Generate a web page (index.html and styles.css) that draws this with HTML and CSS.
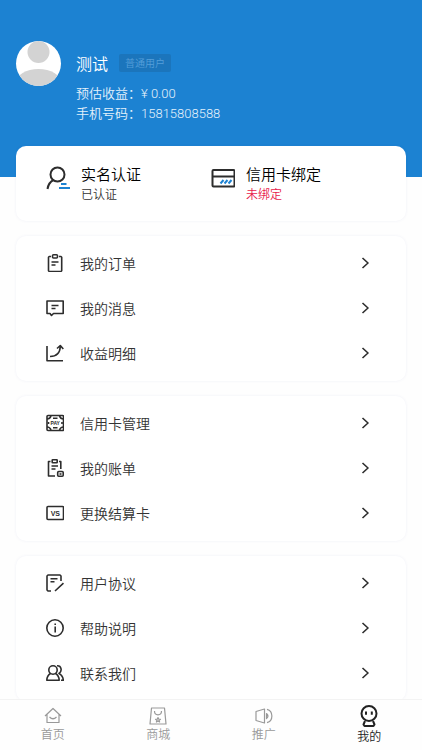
FILE: index.html
```html
<!DOCTYPE html>
<html lang="zh-CN">
<head>
    <meta charset="UTF-8">
    <meta name="viewport" content="width=device-width, initial-scale=1.0">
    <title>我的</title>
    <link rel="stylesheet" href="styles.css">
</head>
<body>
    <main class="content">
        <header class="header">
            <svg class="avatar" viewBox="0 0 45 45" aria-hidden="true">
                <circle cx="22.5" cy="11" r="11"/>
                <ellipse cx="22.5" cy="42" rx="22.5" ry="14"/>
            </svg>
            <div class="user-info">
                <div class="user-name"><span>测试</span><span class="user-tag">普通用户</span></div>
                <p>预估收益：¥ 0.00</p>
                <p>手机号码：15815808588</p>
            </div>
        </header>

        <section class="card auth">
            <a class="auth-item" href="#">
                <svg class="auth-icon" viewBox="0 0 24 24">
                    <circle cx="11.500" cy="8.500" r="7"/>
                    <path d="M7.500 14Q2.500 16.500 1.500 23"/>
                    <path class="blue" d="M15 18H20.500M13 22H24"/>
                </svg>
                <span class="auth-text">实名认证<small>已认证</small></span>
            </a>
            <a class="auth-item" href="#">
                <svg class="auth-icon" viewBox="0 0 24 24">
                    <rect x="1.500" y="4" width="22" height="16.500" rx="1"/>
                    <path d="M1.500 10.500H23.500"/>
                    <path class="blue" d="M9.500 17.500L12.500 14M13.500 17.500L16.500 14M17.500 17.500L20.500 14"/>
                </svg>
                <span class="auth-text">信用卡绑定<small class="unbound">未绑定</small></span>
            </a>
        </section>

        <nav class="card menu">
            <a class="menu-item" href="#">
                <svg class="icon" viewBox="0 0 18 18">
                    <path d="M5 2.500H3.200L2.500 3.200V16.800L3.200 17.500H15L15.700 16.800V3.200L15 2.500H13"/>
                    <rect x="6.500" y="0.800" width="5" height="3.200" rx="1"/>
                    <path d="M5.500 8H12.500M5.500 11H9.500"/>
                </svg>
                <span>我的订单</span>
                <svg class="arrow" viewBox="0 0 8 12"><path d="M1.500 1L7 6L1.500 11"/></svg>
            </a>
            <a class="menu-item" href="#">
                <svg class="icon" viewBox="0 0 18 18">
                    <path d="M1 2H17.200V14.500H7.500L5.500 16.500L4 14.500H1Z"/>
                    <path d="M5.500 6.500H12.500M5.500 9.500H9.500"/>
                </svg>
                <span>我的消息</span>
                <svg class="arrow" viewBox="0 0 8 12"><path d="M1.500 1L7 6L1.500 11"/></svg>
            </a>
            <a class="menu-item" href="#">
                <svg class="icon" viewBox="0 0 18 18">
                    <path d="M1 2V16.800H17"/>
                    <path d="M4 12.500C10.500 12.500 14 9 14.300 2.500M11 4.500L14.300 1.500L17.300 5"/>
                </svg>
                <span>收益明细</span>
                <svg class="arrow" viewBox="0 0 8 12"><path d="M1.500 1L7 6L1.500 11"/></svg>
            </a>
        </nav>

        <nav class="card menu">
            <a class="menu-item" href="#">
                <svg class="icon" viewBox="0 0 18 18">
                    <rect x="1" y="1.500" width="16.500" height="15" rx="1"/>
                    <path d="M1 5Q4 5 5 2M17.500 5Q14.500 5 13.500 2M1 13Q4 13 5 16M17.500 13Q14.500 13 13.500 16"/>
                    <path d="M7 4.200H11.500M7 13.800H11.500M2.500 8V10M16 8V10"/>
                    <text class="pay" x="9.200" y="11.200">PAY</text>
                </svg>
                <span>信用卡管理</span>
                <svg class="arrow" viewBox="0 0 8 12"><path d="M1.500 1L7 6L1.500 11"/></svg>
            </a>
            <a class="menu-item" href="#">
                <svg class="icon" viewBox="0 0 18 18">
                    <path d="M4.500 2.500H2.500V17H9M13 2.500H14.800V10"/>
                    <rect x="6.200" y="0.800" width="5" height="3" rx="0.500"/>
                    <path d="M5.500 7H12M5.500 10H9.500"/>
                    <rect x="11.700" y="12.500" width="5.500" height="4.700" rx="1"/>
                    <path d="M13.500 15H15.500"/>
                </svg>
                <span>我的账单</span>
                <svg class="arrow" viewBox="0 0 8 12"><path d="M1.500 1L7 6L1.500 11"/></svg>
            </a>
            <a class="menu-item" href="#">
                <svg class="icon" viewBox="0 0 18 18">
                    <rect x="1" y="2.500" width="16.500" height="13" rx="1"/>
                    <text class="vs" x="9.300" y="11.700">VS</text>
                </svg>
                <span>更换结算卡</span>
                <svg class="arrow" viewBox="0 0 8 12"><path d="M1.500 1L7 6L1.500 11"/></svg>
            </a>
        </nav>

        <nav class="card menu">
            <a class="menu-item" href="#">
                <svg class="icon" viewBox="0 0 18 18">
                    <path d="M5 17H2L1 16V2L2 1H14L15 2V7"/>
                    <path d="M4.500 4.800H11.500M4.500 7.800H8.500M9 17L17.500 9.200"/>
                </svg>
                <span>用户协议</span>
                <svg class="arrow" viewBox="0 0 8 12"><path d="M1.500 1L7 6L1.500 11"/></svg>
            </a>
            <a class="menu-item" href="#">
                <svg class="icon" viewBox="0 0 18 18">
                    <circle cx="9" cy="9" r="8.200"/>
                    <path d="M9.200 7.500V13.500M9.200 4.500V6"/>
                </svg>
                <span>帮助说明</span>
                <svg class="arrow" viewBox="0 0 8 12"><path d="M1.500 1L7 6L1.500 11"/></svg>
            </a>
            <a class="menu-item" href="#">
                <svg class="icon" viewBox="0 0 18 18">
                    <circle cx="7" cy="6" r="4.200"/>
                    <path d="M4.500 9.500Q1 11.500 0.800 16.300H13.200Q13 11.500 9.500 9.500"/>
                    <path d="M11 1.800C15.500 1.500 16.500 7 13 9.500Q17 11.500 17.300 16.300H15"/>
                </svg>
                <span>联系我们</span>
                <svg class="arrow" viewBox="0 0 8 12"><path d="M1.500 1L7 6L1.500 11"/></svg>
            </a>
        </nav>
    </main>

    <nav class="tabbar">
        <a class="tab" href="#">
            <svg class="tab-icon" viewBox="0 0 18 18">
                <path d="M1 9L9 1.500L17 9M3 7.500V15.500H15V7.500"/>
                <path d="M5.500 10Q9 13.500 12.500 10"/>
            </svg>
            <span>首页</span>
        </a>
        <a class="tab" href="#">
            <svg class="tab-icon" viewBox="0 0 18 18">
                <path d="M2.500 1H15.500L17 17H1Z"/>
                <path d="M5.500 4Q5.500 7.800 9 7.800T12.500 4"/>
                <path d="M9 10.500L9.700 12.200L11.500 12.300L10.100 13.300L10.600 15L9 14L7.400 15L7.900 13.300L6.500 12.300L8.300 12.200Z"/>
            </svg>
            <span>商城</span>
        </a>
        <a class="tab" href="#">
            <svg class="tab-icon" viewBox="0 0 18 18">
                <path d="M1 4.500L9.500 2V16L1 13.500Z"/>
                <path d="M11.500 6.500Q14.500 9 11.500 11.500ZM12 2.300C18.500 4 18.500 14 12 15.700"/>
            </svg>
            <span>推广</span>
        </a>
        <a class="tab active" href="#">
            <svg class="tab-icon large" viewBox="0 0 18 22">
                <circle cx="9" cy="8.500" r="7.500"/>
                <path d="M6 6.500V9.800M11.800 6.500V9.800"/>
                <path d="M5 16L3.500 19.500L4.500 21H13.500L14.500 19.500L13 16"/>
            </svg>
            <span>我的</span>
        </a>
    </nav>
</body>
</html>
```
FILE: styles.css
```css
* {
    box-sizing: border-box;
}
body {
    margin: 0;
    height: 100vh;
    display: flex;
    flex-direction: column;
    background: #fefefe;
    color: #333;
    font-family: "Noto Sans CJK SC", sans-serif;
    font-weight: 350;
}
a {
    color: inherit;
    text-decoration: none;
}
svg {
    flex-shrink: 0;
    fill: none;
    stroke: #2d2d2d;
    stroke-width: 1.6;
    stroke-linejoin: round;
}
.content {
    flex: 1;
    min-height: 0;
    overflow-y: auto;
    scrollbar-width: none;
}

/* user header */
.header {
    display: flex;
    gap: 15px;
    padding: 41px 16px 53px;
    background: #1c82d2;
    color: #fff;
    font-size: 13px;
    line-height: 20px;
}
.avatar {
    width: 45px;
    height: 45px;
    border-radius: 50%;
    background: #fff;
    fill: #d3d3d3;
    stroke: none;
}
.user-info {
    padding-top: 11px;
}
.user-info p {
    margin: 0;
    color: #e4f1fb;
    font-family: Roboto, "Noto Sans CJK SC", sans-serif;
}
.user-name {
    display: flex;
    align-items: center;
    gap: 11px;
    height: 22px;
    margin-bottom: 10px;
    font-size: 16px;
}
.user-tag {
    padding: 0 6px;
    border-radius: 2px;
    background: #1b75bc;
    color: #559fda;
    font-size: 10px;
    line-height: 18px;
}

/* cards */
.card {
    margin: 0 16px 15px;
    border-radius: 10px;
    background: #fff;
    box-shadow: 0 0 3px rgba(60, 80, 160, 0.08);
}
.auth {
    position: relative;
    display: grid;
    grid-template-columns: 1fr 1fr;
    margin-top: -31px;
    padding: 17px 30px 18px;
}
.auth-item {
    display: flex;
    gap: 11px;
    color: #000;
    font-size: 15px;
    line-height: 22px;
}
.auth-icon {
    width: 24px;
    height: 24px;
    margin-top: 3px;
    stroke-width: 2;
}
.auth-icon .blue {
    stroke: #1c82d2;
}
.auth-text small {
    display: block;
    color: #333;
    font-size: 12px;
    line-height: 18px;
}
.auth-text .unbound {
    color: #e8194b;
}
.menu {
    padding: 4px 37px 6px 30px;
}
.menu-item {
    display: flex;
    align-items: center;
    gap: 16px;
    height: 45px;
    font-size: 14px;
}
.menu-item span {
    flex: 1;
}
.icon {
    width: 18px;
    height: 18px;
}
.icon text {
    fill: #2d2d2d;
    stroke: none;
    font-family: "Liberation Sans", sans-serif;
    font-weight: bold;
    text-anchor: middle;
}
.icon .pay {
    font-size: 5px;
}
.icon .vs {
    font-size: 7px;
}
.arrow {
    width: 8px;
    height: 12px;
}

/* bottom bar */
.tabbar {
    display: flex;
    height: 51px;
    padding-top: 7px;
    border-top: 1px solid #f3f3f3;
    background: #fefefe;
}
.tab {
    flex: 1;
    display: flex;
    flex-direction: column;
    align-items: center;
    color: #999;
    font-size: 12px;
    line-height: 18px;
}
.tab-icon {
    width: 18px;
    height: 18px;
    stroke: #999;
    stroke-width: 1.2;
}
.tab.active {
    margin-top: -2px;
    color: #222;
}
.tab-icon.large {
    height: 22px;
    stroke: #222;
    stroke-width: 2;
}
```
